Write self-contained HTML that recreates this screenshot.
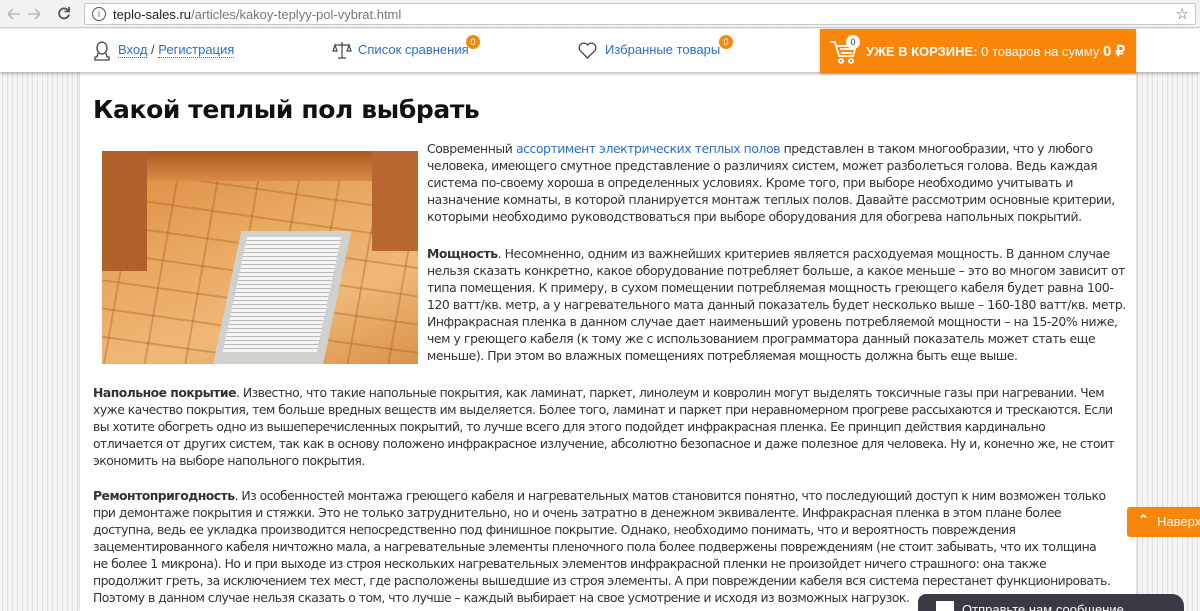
<!DOCTYPE html>
<html><head><meta charset="utf-8"><style>
*{margin:0;padding:0;box-sizing:border-box}
html,body{overflow:hidden}
body{width:1200px;height:611px;overflow:hidden;background:#ececec;font-family:"DejaVu Sans","Liberation Sans",sans-serif;position:relative;
background-image:repeating-linear-gradient(90deg,#f4f4f4 0 2px,#e2e2e2 2px 3px,#f4f4f4 3px 5px);}
.chrome{position:absolute;left:0;top:0;width:1200px;height:28px;background:#f2f2f2;border-bottom:1px solid #ccc}
.url{position:absolute;left:84px;top:3px;width:1112px;height:22px;background:#fff;border:1px solid #c8c8c8;border-radius:2px;font:13px "Liberation Sans",sans-serif;color:#777;padding:3px 0 0 28px}
.url b{font-weight:normal;color:#222}
.hdr{position:absolute;left:0;top:29px;width:1200px;height:43px;background:#fff;box-shadow:0 2px 3px rgba(0,0,0,.25)}
.hl{position:absolute;top:13px;font:13px "Liberation Sans",sans-serif;color:#2f6fc4}
.hl u{text-decoration:none;border-bottom:1px dotted #2f6fc4}
.badge{position:absolute;width:14px;height:14px;border-radius:50%;background:#f08a10;color:#fff;font:9px "Liberation Sans",sans-serif;text-align:center;line-height:14px}
.cart{position:absolute;left:820px;top:29px;width:316px;height:44px;background:#f7860b;color:#fff;font:13px "Liberation Sans",sans-serif;box-shadow:0 1px 2px rgba(0,0,0,.3)}
.panel{position:absolute;left:80px;top:72px;width:1056px;height:539px;background:#fff;box-shadow:0 0 4px rgba(0,0,0,.15)}
h1{position:absolute;left:93px;top:95px;font:bold 25px "DejaVu Sans",sans-serif;color:#111;letter-spacing:-0.4px}
.t{position:absolute;font-size:12.4px;color:#333;white-space:nowrap;line-height:17px;letter-spacing:-0.42px}
.t2{letter-spacing:-0.52px}
.t div{height:17px}
.t a{color:#2f6fc4;text-decoration:none}
.img{position:absolute;left:102px;top:151px;width:316px;height:213px;overflow:hidden;background:
repeating-linear-gradient(100deg,transparent 0 38px,rgba(160,90,30,.35) 38px 40px),
repeating-linear-gradient(8deg,transparent 0 26px,rgba(160,90,30,.35) 26px 28px),
linear-gradient(160deg,#d88a3c,#e9a860 40%,#f0b878 70%,#d9934a)}
.btn{position:absolute;left:1127px;top:507px;width:80px;height:30px;background:#f7860b;color:#fff;font:13px "Liberation Sans",sans-serif;padding:7px 0 0 30px;border-radius:3px 0 0 3px}
.msg{position:absolute;left:918px;top:594px;width:266px;height:17px;overflow:hidden;background:#3a3a44;border-radius:8px 12px 0 0;color:#fff;font:13px "Liberation Sans",sans-serif;padding:8px 0 0 44px}
</style></head><body>
<div class="chrome">
<svg style="position:absolute;left:6px;top:6px" width="50" height="16" viewBox="0 0 50 16" fill="none" stroke-width="1.6">
<path d="M2 8h12M2 8l5-5M2 8l5 5" stroke="#bbb"/><path d="M22 8h12M34 8l-5-5M34 8l-5 5" stroke="#bbb"/>
</svg>
<svg style="position:absolute;left:56px;top:5px" width="16" height="16" viewBox="0 0 16 16" fill="none" stroke="#555" stroke-width="1.8"><path d="M12.5 6A5 5 0 1 0 13 9.5"/><path d="M13 2v4.5H8.5"/></svg>
<svg style="position:absolute;left:64px;top:5px;display:none" width="1" height="1"></svg>
<svg style="position:absolute;left:78px;top:5px" width="0" height="0"></svg>
<div class="url" style="left:84px"><span style="position:absolute;left:7px;top:3px;width:14px;height:14px;border:1.3px solid #555;border-radius:50%;font-size:9px;text-align:center;line-height:12px;color:#555">i</span><b>teplo-sales.ru</b>/articles/kakoy-teplyy-pol-vybrat.html<span style="position:absolute;right:6px;top:1px;color:#666;font-size:15px">☆</span></div>
</div>
<div class="panel"></div>
<div class="hdr">
<svg style="position:absolute;left:92px;top:12px" width="20" height="20" viewBox="0 0 20 20" fill="none" stroke="#444" stroke-width="1.3"><ellipse cx="10" cy="7" rx="5" ry="6"/><path d="M6 12l-1 4H3v3h14v-3h-2l-1-4"/></svg>
<div class="hl" style="left:118px"><u>Вход</u> <span style="color:#444">/</span> <u>Регистрация</u></div>
<svg style="position:absolute;left:332px;top:11px" width="20" height="20" viewBox="0 0 20 20" fill="none" stroke="#444" stroke-width="1.2"><path d="M10 2v16M6 18h8M3 5h14M3 5l-2 6h4zM17 5l-2 6h4z"/></svg>
<div class="hl" style="left:358px">Список сравнения</div>
<div class="badge" style="left:466px;top:6px">0</div>
<svg style="position:absolute;left:578px;top:13px" width="19" height="17" viewBox="0 0 19 17" fill="none" stroke="#444" stroke-width="1.3"><path d="M9.5 16L2 8.5A4.2 4.2 0 0 1 9.5 3a4.2 4.2 0 0 1 7.5 5.5z"/></svg>
<div class="hl" style="left:605px">Избранные товары</div>
<div class="badge" style="left:719px;top:6px">0</div>
</div>
<div class="cart">
<svg style="position:absolute;left:9px;top:10px" width="28" height="26" viewBox="0 0 28 26" fill="none" stroke="#fff" stroke-width="1.8"><path d="M1 3h5l4 14h14l3-10H8M11 10h14M12 14h11"/><circle cx="12" cy="22" r="2"/><circle cx="22" cy="22" r="2"/></svg>
<div class="badge" style="left:26px;top:6px;background:#fff;color:#333">0</div>
<div style="position:absolute;left:46px;top:13px"><b>УЖЕ В КОРЗИНЕ:</b> 0 товаров на сумму <b style="font-size:15px">0 ₽</b></div>
</div>
<h1>Какой теплый пол выбрать</h1>
<div class="img">
<div style="position:absolute;left:0;top:0;width:316px;height:30px;background:linear-gradient(#a85a20,#d98c45)"></div>
<div style="position:absolute;left:0;top:0;width:45px;height:120px;background:#b0602a"></div>
<div style="position:absolute;left:270px;top:0;width:46px;height:100px;background:#b8682e"></div>
<div style="position:absolute;left:125px;top:80px;width:110px;height:135px;background:#d0d0cc;transform:skewX(-12deg)"></div>
<div style="position:absolute;left:133px;top:86px;width:94px;height:115px;background:repeating-linear-gradient(0deg,#f4f4f4 0 3px,#bbb 3px 4px),#eee;transform:skewX(-12deg)"></div>
</div>
<div class="t" style="left:427px;top:140px">
<div>Современный <a>ассортимент электрических теплых полов</a> представлен в таком многообразии, что у любого</div>
<div>человека, имеющего смутное представление о различиях систем, может разболеться голова. Ведь каждая</div>
<div>система по-своему хороша в определенных условиях. Кроме того, при выборе необходимо учитывать и</div>
<div>назначение комнаты, в которой планируется монтаж теплых полов. Давайте рассмотрим основные критерии,</div>
<div>которыми необходимо руководствоваться при выборе оборудования для обогрева напольных покрытий.</div>
<div style="height:20px"></div>
<div><b>Мощность</b>. Несомненно, одним из важнейших критериев является расходуемая мощность. В данном случае</div>
<div>нельзя сказать конкретно, какое оборудование потребляет больше, а какое меньше – это во многом зависит от</div>
<div>типа помещения. К примеру, в сухом помещении потребляемая мощность греющего кабеля будет равна 100-</div>
<div>120 ватт/кв. метр, а у нагревательного мата данный показатель будет несколько выше – 160-180 ватт/кв. метр.</div>
<div>Инфракрасная пленка в данном случае дает наименьший уровень потребляемой мощности – на 15-20% ниже,</div>
<div>чем у греющего кабеля (к тому же с использованием программатора данный показатель может стать еще</div>
<div>меньше). При этом во влажных помещениях потребляемая мощность должна быть еще выше.</div>
</div>
<div class="t t2" style="left:93px;top:384px">
<div><b>Напольное покрытие</b>. Известно, что такие напольные покрытия, как ламинат, паркет, линолеум и ковролин могут выделять токсичные газы при нагревании. Чем</div>
<div>хуже качество покрытия, тем больше вредных веществ им выделяется. Более того, ламинат и паркет при неравномерном прогреве рассыхаются и трескаются. Если</div>
<div>вы хотите обогреть одно из вышеперечисленных покрытий, то лучше всего для этого подойдет инфракрасная пленка. Ее принцип действия кардинально</div>
<div>отличается от других систем, так как в основу положено инфракрасное излучение, абсолютно безопасное и даже полезное для человека. Ну и, конечно же, не стоит</div>
<div>экономить на выборе напольного покрытия.</div>
</div>
<div class="t t2" style="left:93px;top:487px">
<div><b>Ремонтопригодность</b>. Из особенностей монтажа греющего кабеля и нагревательных матов становится понятно, что последующий доступ к ним возможен только</div>
<div>при демонтаже покрытия и стяжки. Это не только затруднительно, но и очень затратно в денежном эквиваленте. Инфракрасная пленка в этом плане более</div>
<div>доступна, ведь ее укладка производится непосредственно под финишное покрытие. Однако, необходимо понимать, что и вероятность повреждения</div>
<div>зацементированного кабеля ничтожно мала, а нагревательные элементы пленочного пола более подвержены повреждениям (не стоит забывать, что их толщина</div>
<div>не более 1 микрона). Но и при выходе из строя нескольких нагревательных элементов инфракрасной пленки не произойдет ничего страшного: она также</div>
<div>продолжит греть, за исключением тех мест, где расположены вышедшие из строя элементы. А при повреждении кабеля вся система перестанет функционировать.</div>
<div>Поэтому в данном случае нельзя сказать о том, что лучше – каждый выбирает на свое усмотрение и исходя из возможных нагрузок.</div>
</div>
<div class="btn"><span style="position:absolute;left:11px;top:5px;font-weight:bold">⌃</span>Наверх</div>
<div class="msg"><span style="position:absolute;left:18px;top:7px;width:18px;height:13px;background:#fff"></span>Отправьте нам сообщение</div>
</body></html>
